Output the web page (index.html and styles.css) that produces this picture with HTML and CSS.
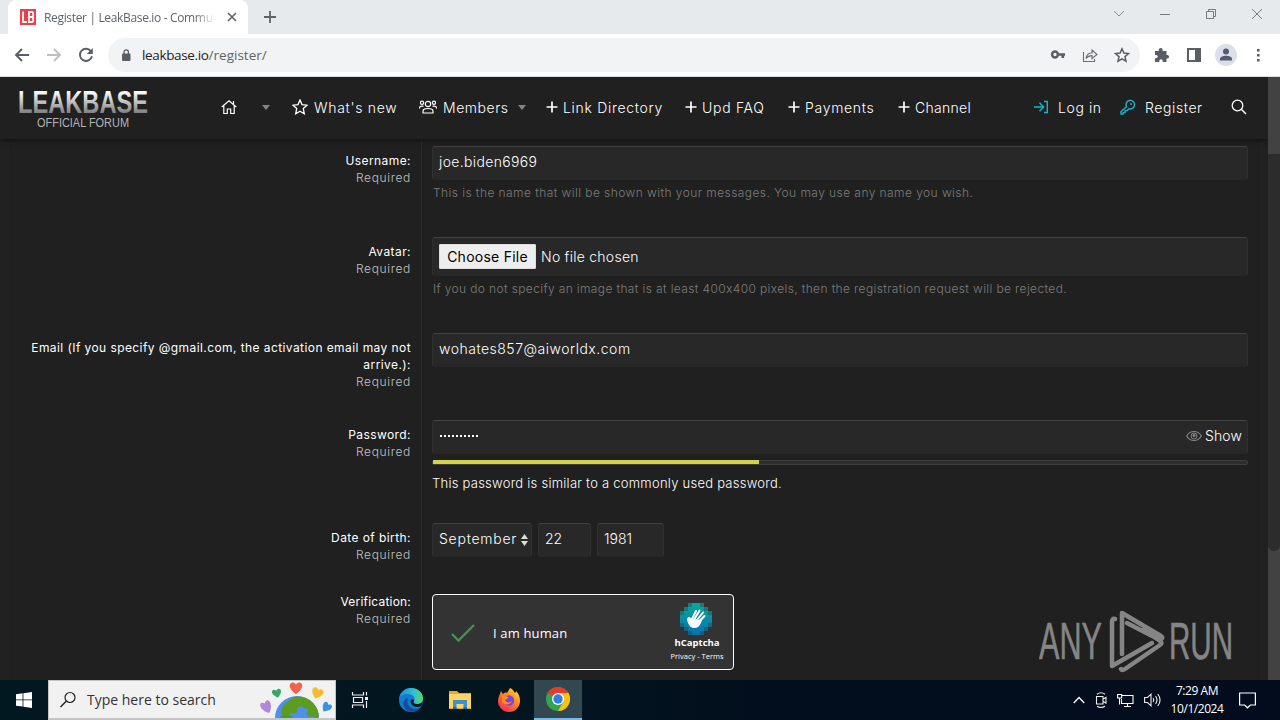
FILE: index.html
```
<!DOCTYPE html>
<html lang="en">
<head>
  <meta charset="UTF-8">
  <title>Register | LeakBase.io - Community</title>
  <link rel="stylesheet" href="styles.css">
</head>
<body>
  <!-- browser -->
  <div class="tabstrip">
    <div class="tab">
      <svg class="favicon" width="16" height="16" viewBox="0 0 16 16"><rect width="16" height="16" fill="#e8414a"/><path d="M3 2.5v10.5h4M9 3h3.2l1 1v3l-1 1 1 1v3l-1 1H9zM9 8h3" fill="none" stroke="#fff" stroke-width="1.8"/></svg>
      <span class="tab-title">Register | LeakBase.io - Commu</span>
      <svg class="tab-close" width="10" height="10" viewBox="0 0 10 10"><path d="M1 1l8 8M9 1l-8 8" stroke="#5f6368" stroke-width="1.6"/></svg>
    </div>
    <svg class="new-tab" width="12" height="12" viewBox="0 0 12 12"><path d="M6 0v12M0 6h12" stroke="#5f6368" stroke-width="1.8"/></svg>
    <div class="window-controls">
      <svg width="12" height="12" viewBox="0 0 12 12"><path d="M1 3l5 5 5-5" fill="none" stroke="#8b8d90"/></svg>
      <svg width="12" height="12" viewBox="0 0 12 12"><path d="M1 6.5h10" stroke="#77797c"/></svg>
      <svg width="12" height="12" viewBox="0 0 12 12"><path d="M1.500 3.500h7v7h-7zM3.500 3.500v-2h7v7h-2" fill="none" stroke="#77797c"/></svg>
      <svg width="12" height="12" viewBox="0 0 12 12"><path d="M1 1l10 10M11 1L1 11" stroke="#77797c"/></svg>
    </div>
  </div>
  <div class="toolbar">
    <svg width="16" height="16" viewBox="0 0 16 16"><path d="M15 8H2M8 2L2 8l6 6" fill="none" stroke="#5a5d61" stroke-width="1.9"/></svg>
    <svg width="16" height="16" viewBox="0 0 16 16"><path d="M1 8h13M8 2l6 6-6 6" fill="none" stroke="#bdbfc2" stroke-width="1.9"/></svg>
    <svg width="16" height="16" viewBox="0 0 16 16"><path d="M13.200 4.500A6.100 6.100 0 1 0 14 9.200" fill="none" stroke="#5a5d61" stroke-width="1.900"/><path d="M14.800 1v6H8.800z" fill="#5a5d61"/></svg>
    <div class="omnibox">
      <svg width="10" height="12" viewBox="0 0 10 12"><rect x="1" y="4.500" width="8.500" height="7.500" rx="1" fill="#5a5d61"/><path d="M3 5V3a2.200 2.200 0 0 1 4.400 0v2" fill="none" stroke="#5a5d61" stroke-width="1.300"/></svg>
      <span class="url">leakbase.io<span class="url-path">/register/</span></span>
      <div class="omnibox-icons">
        <svg width="16" height="16" viewBox="0 0 16 16"><circle cx="5" cy="7.500" r="2.900" fill="none" stroke="#5a5d61" stroke-width="2.500"/><path d="M8 7.500h7M12.800 7.500v3.500" stroke="#5a5d61" stroke-width="2.700"/></svg>
        <svg width="16" height="16" viewBox="0 0 16 16"><path d="M1.500 5v9.500h11V12M4 11.500c.5-4 3-5.500 6-5.500V3l5 4.500-5 4V8.600c-3 0-4.500.8-6 2.900z" fill="none" stroke="#6b6e72" stroke-width="1.100"/></svg>
        <svg width="16" height="16" viewBox="0 0 16 16"><path d="M8 1.800l1.900 4.300 4.600.5-3.500 3 1 4.600-4-2.400-4 2.400 1-4.600-3.500-3 4.600-.5z" fill="none" stroke="#5a5d61" stroke-width="1.500"/></svg>
      </div>
    </div>
    <div class="extensions">
      <svg width="16" height="16" viewBox="0 0 16 16"><path d="M1 4h3.700V3a2 2 0 0 1 4 0v1h3.800v4h.9a1.700 1.700 0 0 1 0 3.400h-.9V15H8.700v-1a1.700 1.700 0 0 0-3.400 0v1H1v-3.700h1a1.700 1.700 0 0 0 0-3.400H1z" fill="#5a5d61"/></svg>
      <svg width="16" height="16" viewBox="0 0 16 16"><path d="M1 1h14v14H1zM3 3v10h6V3z" fill="#5a5d61" fill-rule="evenodd"/></svg>
      <svg width="22" height="22" viewBox="0 0 22 22"><circle cx="11" cy="11" r="11" fill="#dcdee8"/><circle cx="11" cy="7.500" r="3" fill="#565a73"/><path d="M5 16.500v-1.500c0-2.500 4-3.200 6-3.200s6 .7 6 3.200v1.500z" fill="#565a73"/></svg>
      <svg width="16" height="16" viewBox="0 0 16 16"><path d="M7 2h2.600v2.600H7zM7 7h2.600v2.600H7zM7 12h2.600v2.600H7z" fill="#5a5d61"/></svg>
    </div>
  </div>

  <!-- forum page -->
  <div class="page">
    <div class="page-view">
      <header class="site-header">
        <svg class="logo" width="130" height="48" viewBox="0 0 130 48">
          <defs>
            <linearGradient id="silver" x1="0" y1="0" x2="0" y2="1">
              <stop offset=".2" stop-color="#ffffff"/>
              <stop offset=".85" stop-color="#777777"/>
            </linearGradient>
          </defs>
          <text class="logo-name" x="0" y="29" textLength="130" lengthAdjust="spacingAndGlyphs" fill="url(#silver)">LEAKBASE</text>
          <text class="logo-sub" x="19" y="43" textLength="92" lengthAdjust="spacingAndGlyphs">OFFICIAL FORUM</text>
        </svg>
        <nav class="nav">
          <a class="nav-item home"><svg width="16" height="16" viewBox="0 0 16 16"><path d="M.7 8L8 1.800 15.300 8M2.800 6.500v8h3.500V10h3.400v4.500h3.500v-8M12.500 5V2" fill="none" stroke="#fff" stroke-width="1.200"/></svg><i class="caret"></i></a>
          <a class="nav-item"><svg width="16" height="16" viewBox="0 0 16 16"><path d="M8 1l2 4.600 5 .6-3.700 3.400 1 5.200L8 12.300l-4.300 2.500 1-5.200L1 6.200l5-.6z" fill="none" stroke="#fff" stroke-width="1.300"/></svg><span>What's new</span></a>
          <a class="nav-item members"><svg width="18" height="14" viewBox="0 0 18 14"><g fill="none" stroke="#fff" stroke-width="1.200"><circle cx="9" cy="4" r="2.700"/><circle cx="3" cy="2.700" r="1.600"/><circle cx="15" cy="2.700" r="1.600"/><path d="M4 13v-1.800c0-2 2-2.700 5-2.700s5 .7 5 2.700V13zM.6 8.500V7.600C.6 6.500 2 6 4.500 6.200M17.400 8.500v-.9c0-1.100-1.400-1.600-3.900-1.400"/></g></svg><span>Members</span><i class="caret"></i></a>
          <a class="nav-item plus"><svg width="12" height="12" viewBox="0 0 12 12"><path d="M6 .5v11M.5 6h11" stroke="#fff" stroke-width="1.700"/></svg><span>Link Directory</span></a>
          <a class="nav-item plus"><svg width="12" height="12" viewBox="0 0 12 12"><path d="M6 .5v11M.5 6h11" stroke="#fff" stroke-width="1.700"/></svg><span>Upd FAQ</span></a>
          <a class="nav-item plus"><svg width="12" height="12" viewBox="0 0 12 12"><path d="M6 .5v11M.5 6h11" stroke="#fff" stroke-width="1.700"/></svg><span>Payments</span></a>
          <a class="nav-item plus channel"><svg width="12" height="12" viewBox="0 0 12 12"><path d="M6 .5v11M.5 6h11" stroke="#fff" stroke-width="1.700"/></svg><span>Channel</span></a>
        </nav>
        <div class="account">
          <a class="nav-item login"><svg width="15" height="14" viewBox="0 0 15 14"><path d="M0 7h9M5.500 2.800L9.700 7l-4.200 4.200M10 1.500h3.300v11H10" fill="none" stroke="#17b5c8" stroke-width="1.400"/></svg><span>Log in</span></a>
          <a class="nav-item register"><svg width="16" height="16" viewBox="0 0 16 16"><path d="M6.500 7.800A4.300 4.300 0 1 1 9 9.800L7 11.500l-1.800.2-.2 1.800-1.800.2L3 15H1v-2.500z" fill="none" stroke="#17b5c8" stroke-width="1.400"/><circle cx="11" cy="5" r="1" fill="#17b5c8"/></svg><span>Register</span></a>
          <svg class="search-icon" width="16" height="16" viewBox="0 0 16 16"><circle cx="6.500" cy="6.500" r="5.300" fill="none" stroke="#fff" stroke-width="1.300"/><path d="M10.300 10.300l4.700 4.700" stroke="#fff" stroke-width="1.500"/></svg>
        </div>
      </header>

      <form class="form">
        <div class="row">
          <div class="label">Username:<small>Required</small></div>
          <div class="field">
            <div class="input">joe.biden6969</div>
            <div class="hint">This is the name that will be shown with your messages. You may use any name you wish.</div>
          </div>
        </div>
        <div class="row">
          <div class="label">Avatar:<small>Required</small></div>
          <div class="field">
            <div class="input input-file"><button type="button" class="file-button">Choose File</button>No file chosen</div>
            <div class="hint hint-avatar">If you do not specify an image that is at least 400x400 pixels, then the registration request will be rejected.</div>
          </div>
        </div>
        <div class="row">
          <div class="label">Email (If you specify @gmail.com, the activation email may not arrive.):<small>Required</small></div>
          <div class="field">
            <div class="input input-email">wohates857@aiworldx.com</div>
          </div>
        </div>
        <div class="row">
          <div class="label">Password:<small>Required</small></div>
          <div class="field">
            <div class="input input-password">
              <span class="dots"><i></i><i></i><i></i><i></i><i></i><i></i><i></i><i></i><i></i><i></i></span>
              <span class="show"><svg width="16" height="12" viewBox="0 0 16 12"><path d="M.7 6C4 0 12 0 15.300 6 12 12 4 12 .7 6z" fill="none" stroke="#858585" stroke-width="1.200"/><circle cx="8" cy="6" r="3" fill="none" stroke="#858585"/><circle cx="8" cy="5.500" r="1.500" fill="#858585"/></svg>Show</span>
            </div>
            <div class="meter"><div class="meter-fill"></div></div>
            <div class="meter-text">This password is similar to a commonly used password.</div>
          </div>
        </div>
        <div class="row">
          <div class="label">Date of birth:<small>Required</small></div>
          <div class="field dob">
            <div class="input month">September<svg width="7" height="12" viewBox="0 0 7 12"><path d="M3.500 0L7 5H0zM3.500 12L0 7h7z" fill="#ddd"/></svg></div>
            <div class="input day">22</div>
            <div class="input year">1981</div>
          </div>
        </div>
        <div class="row">
          <div class="label label-verify">Verification:<small>Required</small></div>
          <div class="field">
            <div class="captcha">
              <svg class="check" width="26" height="20" viewBox="0 0 26 20"><path d="M2 11l6.500 6.500L24 2" fill="none" stroke="#43934a" stroke-width="2.400"/></svg>
              <span class="captcha-text">I am human</span>
              <div class="captcha-brand">
                <svg width="32" height="32" viewBox="0 0 32 32">
                  <defs><linearGradient id="teal" x1="0" y1="0" x2="0" y2="1"><stop offset="0" stop-color="#0aa89a"/><stop offset="1" stop-color="#0672b0"/></linearGradient></defs>
                  <path d="M8 0h16v4h4v4h4v16h-4v4h-4v4H8v-4H4v-4H0V8h4V4h4z" fill="url(#teal)" opacity=".65"/>
                  <path d="M12 0h8v4h4v4h4v4h4v8h-4v4h-4v4h-4v4h-8v-4H8v-4H4v-4H0v-8h4V8h4V4h4z" fill="url(#teal)"/>
                  <path d="M9 15l3 3" stroke="#fff" stroke-width="2.400" stroke-linecap="round"/>
                  <path d="M12 16l4-8M14.500 16l5-8.500M17 17l6-7.500M18.500 19l6-6" stroke="#fff" stroke-width="2" stroke-linecap="round"/>
                  <path d="M8 15c-1.500 0-1 2 0 5s3.500 5 6.500 5c4 0 6-3 8-9l-4 1-6-1.500-1.500 2C10 16 9 15 8 15z" fill="#fff"/>
                </svg>
                <b>hCaptcha</b>
                <small>Privacy - Terms</small>
              </div>
            </div>
          </div>
        </div>
      </form>

      <svg class="watermark" width="194" height="64" viewBox="0 0 194 64">
        <text x="0" y="50" textLength="63" lengthAdjust="spacingAndGlyphs">ANY</text>
        <text x="130" y="50" textLength="64" lengthAdjust="spacingAndGlyphs">RUN</text>
        <g fill="none" stroke="#858585" stroke-width="4.500" stroke-linecap="round" stroke-linejoin="round">
          <path d="M76 10q-3-1-3 3v44l40-23"/>
          <path d="M83 45V4l39 23q3 2-1 4L88 14"/>
          <path d="M105 20l16 12q3 2 0 4L86 60q-3 2-4 0"/>
        </g>
      </svg>
    </div>
    <div class="scrollbar"><div class="thumb"></div></div>
  </div>

  <!-- windows taskbar -->
  <div class="taskbar">
    <div class="start"><svg width="16" height="16" viewBox="0 0 16 16"><path d="M0 2.200l6.600-.9v6.200H0zM7.400 1.200L16 0v7.500H7.400zM0 8.300h6.600v6.300L0 13.700zM7.400 8.300H16V16l-8.600-1.200z" fill="#fff"/></svg></div>
    <div class="search">
      <svg width="18" height="18" viewBox="0 0 18 18"><circle cx="11" cy="6.500" r="5" fill="none" stroke="#222" stroke-width="1.200"/><path d="M7.400 10L1.500 16" stroke="#222" stroke-width="1.400"/></svg>
      <span>Type here to search</span>
      <svg class="earth" width="76" height="36" viewBox="0 0 76 36">
        <defs>
          <path id="heart" d="M0 4C-7-1-5-5-2.500-5-1-5 0-3.500 0-3.500S1-5 2.500-5C5-5 7-1 0 4z"/>
          <clipPath id="globe"><circle cx="37" cy="36" r="22"/></clipPath>
        </defs>
        <circle cx="37" cy="36" r="22" fill="#4f8fee"/>
        <g clip-path="url(#globe)">
          <path d="M21 28c3-7 9-10 13-13 8-2 18 1 22 8 5 9 3 13 0 13-4-4-6 1-9-3-2-3 3-4 0-6-4-1-5-4-9-2-3 3 2 4-2 6-4 1-6-1-7 2l-6 3z" fill="#5c9c1f"/>
          <path d="M20 36c1-4 8-5 14 0z" fill="#4b9a35"/>
        </g>
        <use href="#heart" transform="translate(36 7) scale(1.300)" fill="#f0644e"/>
        <use href="#heart" transform="translate(17 12) rotate(-12) scale(.95)" fill="#36a866"/>
        <use href="#heart" transform="translate(57 12) rotate(20) scale(1.200)" fill="#f3bd2f"/>
        <use href="#heart" transform="translate(7 26) rotate(-25) scale(1.100 1.400)" fill="#b187dc"/>
        <use href="#heart" transform="translate(66 26) rotate(35) scale(.95 1.100)" fill="#3595e0"/>
      </svg>
    </div>
    <div class="task"><svg width="18" height="18" viewBox="0 0 18 18"><path d="M1.500 1v3h11V1M1.500 17v-3h11v3M2.500 6.500h9v5h-9zM15.500 1v3.500M15.500 10v7" fill="none" stroke="#eee" stroke-width="1.200"/><path d="M14 6h3v3h-3z" fill="#eee"/></svg></div>
    <div class="task"><svg width="24" height="24" viewBox="0 0 24 24">
      <defs>
        <linearGradient id="edge1" x1="0" y1="0" x2="1" y2="0"><stop offset="0" stop-color="#2187d6"/><stop offset=".6" stop-color="#2fc0d4"/><stop offset="1" stop-color="#5bd766"/></linearGradient>
      </defs>
      <circle cx="12" cy="12" r="12" fill="#137bd0"/>
      <path d="M0 11C1 4 6 0 12 0c7 0 12 5 12 10 0 4-3 6-6 6-4 0-4-2-3-3 2-3-1-7-6-7-4 0-8 2-9 5z" fill="url(#edge1)"/>
      <path d="M9 10c-2 5 1 11 8 11 2 0 4-1 5-2-2 3-6 5-10 5C6 23 3 17 5 13c1-2 3-3 4-3z" fill="#114f9c"/>
      <path d="M15.500 12c-1 1-2 4 2.500 4 2 0 4-.6 5.500-2-.3 3-2 5-5 5-5 0-8-4-6.500-7.500z" fill="#021620"/>
    </svg></div>
    <div class="task"><svg width="22" height="20" viewBox="0 0 22 20"><path d="M0 1h8l2 2h12v16H0z" fill="#e9a726"/><path d="M0 4h22v14H0z" fill="#fcd566"/><path d="M4 10h14v9h-3.500v-5h-7v5H4z" fill="#3c91cf"/><path d="M4 17h3.500v2H4zM14.500 17H18v2h-3.500z" fill="#1b6eb0"/></svg></div>
    <div class="task"><svg width="24" height="24" viewBox="0 0 24 24">
      <defs><linearGradient id="fire" x1="1" y1="0" x2=".2" y2="1"><stop offset="0" stop-color="#fff04a"/><stop offset=".45" stop-color="#ff8a1f"/><stop offset="1" stop-color="#f5265e"/></linearGradient></defs>
      <path d="M13 0c3 1 4 4 5 5 1-1 1-2 1-2 3 3 4 6 4 10a11 11 0 0 1-22 0C1 9 3 6 4 3l2 3c1-1 3-2 4-1 1-2 2-3 3-5z" fill="url(#fire)"/>
      <circle cx="12" cy="12.500" r="5.200" fill="#7b43df"/>
      <path d="M5 8c3-1 4 0 6 1 1 1-1 2-3 3 1 3 5 3 7 1-1 4-9 5-10 0z" fill="#ff8b1e"/>
    </svg></div>
    <div class="task active"><svg width="24" height="24" viewBox="0 0 24 24"><circle cx="12" cy="12" r="12" fill="#33a451"/><path d="M12 12L1.600 6A12 12 0 0 1 22.400 6z" fill="#e33b2e"/><path d="M12 6h10.400A12 12 0 0 1 12 24l5.200-9z" fill="#fbc116"/><circle cx="12" cy="12" r="6" fill="#fff"/><circle cx="12" cy="12" r="4.700" fill="#2f7de9"/></svg></div>
    <div class="tray">
      <svg width="12" height="8" viewBox="0 0 12 8"><path d="M.8 7L6 1.500 11.200 7" fill="none" stroke="#fff" stroke-width="1.300"/></svg>
      <svg width="12" height="16" viewBox="0 0 12 16"><path d="M1.500 4.500h6.500v7.500H1.500zM8 7l3-1.500V11L8 9.500M2 2.200q4-3 8 0M2 14.200q4 2.500 8 0" fill="none" stroke="#eee" stroke-width="1.100"/></svg>
      <svg width="17" height="15" viewBox="0 0 17 15"><path d="M5 2.500h11v8H4.500V6M7 13.500h7M10.500 10.500v3M.6 1.500h4v3.500h-4zM2.500 5v6.500" fill="none" stroke="#fff" stroke-width="1.100"/></svg>
      <svg width="17" height="14" viewBox="0 0 17 14"><path d="M.6 4.500h2.900L7 1.200v11.600L3.500 9.500H.6zM9 5q1.500 2 0 4M11.500 3q3 4 0 8M13.800 1q4.500 6 0 12" fill="none" stroke="#eee" stroke-width="1.100"/></svg>
      <div class="clock"><div class="time">7:29 AM</div><div>10/1/2024</div></div>
      <svg class="notify" width="17" height="17" viewBox="0 0 17 17"><path d="M.6 1h15.800v12h-5L8.500 15.800 5.600 13h-5z" fill="none" stroke="#fff" stroke-width="1.200"/></svg>
    </div>
  </div>
</body>
</html>
```
FILE: styles.css
```
* {
  box-sizing: border-box;
}
body {
  margin: 0;
  width: 1280px;
  height: 720px;
  overflow: hidden;
  display: flex;
  flex-direction: column;
  font-family: Inter, "Open Sans", sans-serif;
  background: #212121;
}
svg {
  flex: none;
  display: block;
}

/* browser */
.tabstrip {
  height: 34px;
  flex: none;
  display: flex;
  align-items: center;
  background: #e7eaed;
  padding-left: 8px;
  font-family: "Open Sans", sans-serif;
}
.tab {
  width: 240px;
  height: 34px;
  display: flex;
  align-items: center;
  background: #fff;
  border-radius: 8px 8px 0 0;
  padding: 0 11px 0 12px;
}
.tab-title {
  width: 171px;
  margin: 0 12px 0 8px;
  white-space: nowrap;
  font-size: 12px;
  letter-spacing: -.34px;
  color: #606468;
  -webkit-mask-image: linear-gradient(90deg, #000 88%, transparent);
  mask-image: linear-gradient(90deg, #000 88%, transparent);
}
.new-tab {
  margin-left: 16px;
}
.window-controls {
  margin-left: auto;
  display: flex;
  gap: 34px;
  padding-right: 17px;
  margin-top: -6px;
}
.toolbar {
  height: 43px;
  flex: none;
  display: flex;
  align-items: center;
  gap: 16px;
  padding-left: 14px;
  background: #fff;
  border-bottom: 1px solid #dcdee0;
  font-family: "Open Sans", sans-serif;
}
.omnibox {
  width: 1032px;
  height: 34px;
  margin-left: -2px;
  padding: 0 10px 0 13px;
  display: flex;
  align-items: center;
  gap: 11px;
  border-radius: 17px;
  background: #f1f3f4;
}
.url {
  font-size: 13.5px;
  letter-spacing: -.35px;
  color: #202124;
}
.url-path {
  color: #5f6368;
  letter-spacing: 0;
}
.omnibox-icons {
  margin-left: auto;
  display: flex;
  gap: 16px;
}
.extensions {
  display: flex;
  align-items: center;
  gap: 16px;
  margin-left: -2px;
}
.extensions svg:nth-child(3) {
  margin: 0 -3px;
}

/* page */
.page {
  flex: 1;
  min-height: 0;
  display: flex;
}
.page-view {
  position: relative;
  width: 1268px;
  overflow: hidden;
  color: #fff;
}
.scrollbar {
  width: 12px;
  background: #424242;
  padding-top: 77px;
}
.thumb {
  height: 397px;
  background: #2c2c2c;
  border-radius: 0 0 6px 6px;
}
.site-header {
  position: relative;
  height: 62px;
  display: flex;
  align-items: center;
  padding: 0 21px 2px 18px;
  background: #202020;
  box-shadow: 0 1px 6px rgba(0,0,0,.6);
}
.logo {
  margin-top: 2px;
}
.logo-name {
  font: bold 32px "Liberation Sans Narrow", "Liberation Sans", sans-serif;
}
.logo-sub {
  font: 12.5px "Liberation Sans Narrow", "Liberation Sans", sans-serif;
  fill: #b4b4b4;
}
.nav {
  display: grid;
  grid-template-columns: 71px 127px 127px 139px 103px 110px 80px;
  margin-left: 73px;
}
.nav-item {
  display: flex;
  align-items: center;
  gap: 6px;
  font-size: 14px;
  font-weight: 300;
  letter-spacing: .7px;
  white-space: nowrap;
}
.plus {
  gap: 5px;
}
.channel {
  letter-spacing: .3px;
}
.home {
  gap: 25px;
}
.members {
  letter-spacing: .55px;
}
.caret {
  border: 4px solid transparent;
  border-top: 5px solid #858585;
  border-bottom: 0;
}
.members .caret {
  margin-left: 3px;
}
.account {
  display: flex;
  align-items: center;
  margin-left: auto;
}
.login {
  width: 86px;
  gap: 9px;
}
.register {
  width: 111px;
  gap: 9px;
}
.login, .register {
  letter-spacing: .6px;
}

/* form */
.form {
  margin: 0 9px 0 10px;
  border-left: 1px solid #1e1e1e;
  border-right: 1px solid #1e1e1e;
  background: #202020;
}
.row {
  display: grid;
  grid-template-columns: 411px 1fr;
}
.label {
  padding: 13px 10px 23px 20px;
  border-right: 1px solid #292929;
  text-align: right;
  font-size: 12px;
  line-height: 17px;
  letter-spacing: .42px;
}
.label small {
  display: block;
  font-size: 12px;
  font-weight: 300;
  letter-spacing: .65px;
  color: #c2c2c2;
}
.label-verify {
  padding-top: 6px;
  letter-spacing: .2px;
}
.field {
  padding: 7px 10px 30px;
}
.input {
  height: 34px;
  display: flex;
  align-items: center;
  padding: 0 6px 3px;
  border: 1px solid #303030;
  border-top-color: #414141;
  border-bottom-color: #272727;
  border-radius: 3px;
  background: #282828;
  font-size: 14px;
  font-weight: 300;
  letter-spacing: .35px;
}
.input-email {
  letter-spacing: .5px;
}
.input-file {
  height: 39px;
  padding-bottom: 1px;
  letter-spacing: .25px;
}
.file-button {
  width: 97px;
  height: 25px;
  margin-right: 5px;
  padding: 0;
  border: 1px solid #ddd;
  border-radius: 1px;
  background: #eee;
  color: #000;
  font: 14px Inter, sans-serif;
  letter-spacing: .25px;
}
.hint {
  height: 16px;
  margin-top: 4px;
  padding: 1px 0 0 1px;
  font-size: 12px;
  font-weight: 300;
  line-height: 16px;
  letter-spacing: .43px;
  color: #7d7d7d;
  white-space: nowrap;
}
.hint-avatar {
  letter-spacing: .37px;
}
.input-password {
  justify-content: space-between;
  padding-right: 5px;
}
.dots {
  display: flex;
  gap: 2px;
  padding-left: 1px;
}
.dots i {
  width: 2px;
  height: 2px;
  background: #fff;
}
.show {
  display: flex;
  align-items: center;
  gap: 3px;
  letter-spacing: .1px;
}
.meter {
  height: 5px;
  margin-top: 6px;
  border: 1px solid #3e3e3e;
  border-radius: 2px;
  background: #2d2d2d;
}
.meter-fill {
  width: 40%;
  height: 4px;
  margin-top: -1px;
  background: #d3d24c;
}
.meter-text {
  margin: 10px 0 -5px;
  font-size: 13px;
  font-weight: 300;
  line-height: 16px;
  letter-spacing: .25px;
}
.dob {
  display: flex;
  gap: 6px;
}
.month {
  width: 100px;
  justify-content: space-between;
  padding-right: 3px;
  letter-spacing: .75px;
}
.month svg {
  margin-top: 2px;
}
.day {
  width: 53px;
  letter-spacing: 0;
}
.year {
  width: 67px;
  letter-spacing: 0;
}
.captcha {
  width: 302px;
  height: 76px;
  display: flex;
  align-items: center;
  padding: 1px 9px 0 17px;
  border: 1px solid #fff;
  border-radius: 4px;
  background: #333;
  font-family: "Open Sans", sans-serif;
}
.captcha-text {
  margin-left: 17px;
  font-size: 13px;
  letter-spacing: .15px;
}
.captcha-brand {
  margin-left: auto;
  width: 54px;
  display: flex;
  flex-direction: column;
  align-items: center;
  white-space: nowrap;
}
.captcha-brand svg {
  margin-left: -2px;
}
.captcha-brand b {
  font-size: 9.5px;
  line-height: 15px;
}
.captcha-brand small {
  font-size: 7.5px;
  line-height: 12px;
}
.watermark {
  position: absolute;
  left: 1039px;
  top: 532px;
}
.watermark text {
  font: 52px "Liberation Sans Narrow", "Liberation Sans", sans-serif;
  fill: #858585;
  stroke: #858585;
  stroke-width: .6px;
}

/* taskbar */
.taskbar {
  height: 40px;
  flex: none;
  display: flex;
  background: linear-gradient(90deg, #021820 0%, #021620 40%, #020e1d 60%, #020c1d 100%);
  color: #fff;
  font-family: "Open Sans", sans-serif;
}
.start {
  width: 48px;
  display: flex;
  align-items: center;
  justify-content: center;
}
.search {
  width: 288px;
  display: flex;
  align-items: center;
  gap: 10px;
  padding-left: 10px;
  border: 1px solid #c4c4c4;
  border-width: 1px 1px 2px;
  background: #f1f1f1;
  color: #333;
  font-size: 14px;
}
.earth {
  margin: 1px -1px 0 auto;
}
.task {
  width: 48px;
  margin-right: 1px;
  display: flex;
  align-items: center;
  justify-content: center;
}
.search + .task {
  margin-right: 3px;
}
.active {
  background: #334750;
  border-bottom: 2px solid #76b9ed;
}
.tray {
  margin-left: auto;
  display: flex;
  align-items: center;
  gap: 10px;
  padding-right: 24px;
}
.clock {
  width: 54px;
  margin-left: -1px;
  font-size: 12px;
  line-height: 18px;
  text-align: center;
  letter-spacing: -.45px;
}
.notify {
  margin-left: 5px;
}
```
